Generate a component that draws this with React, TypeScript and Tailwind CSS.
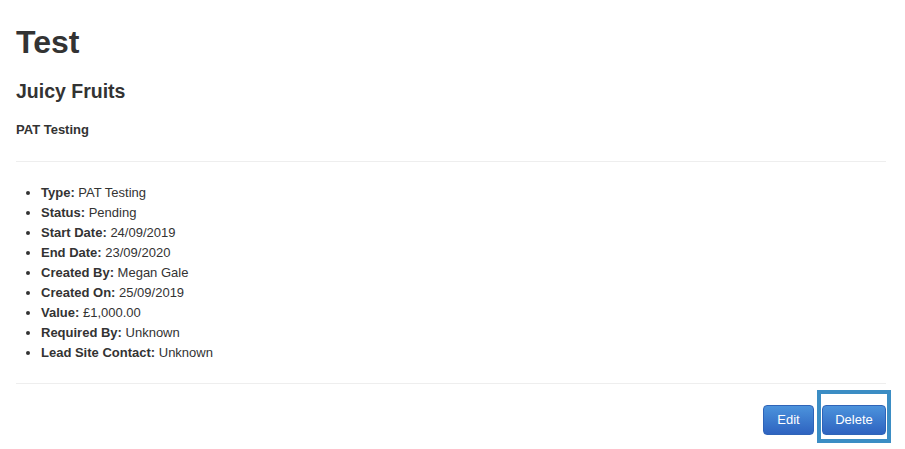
const details: [string, string][] = [
  ["Type:", "PAT Testing"],
  ["Status:", "Pending"],
  ["Start Date:", "24/09/2019"],
  ["End Date:", "23/09/2020"],
  ["Created By:", "Megan Gale"],
  ["Created On:", "25/09/2019"],
  ["Value:", "£1,000.00"],
  ["Required By:", "Unknown"],
  ["Lead Site Contact:", "Unknown"],
];

const btn =
  "h-[30px] rounded-[4px] border border-[#2f64b8] bg-gradient-to-b from-[#4c93dc] to-[#2f63c0] text-[13px] leading-[20px] text-white text-center";

export default function App() {
  return (
    <div className="min-h-screen bg-white pl-4 pr-[19px] text-[#333] font-['Liberation_Sans',Arial,sans-serif]">
      <h1 className="pt-6 text-[32px] leading-[36px] font-bold">Test</h1>
      <h3 className="mt-[20px] text-[19.5px] leading-[22px] font-bold">Juicy Fruits</h3>
      <h5 className="mt-[18px] text-[13px] leading-[20px] font-bold">PAT Testing</h5>

      <hr className="mt-[21px] border-0 border-t border-[#eee]" />

      <ul className="mt-[21px] list-disc pl-[25px] text-[13px] leading-[20px]">
        {details.map(([label, value]) => (
          <li key={label}>
            <b>{label}</b> {value}
          </li>
        ))}
      </ul>

      <hr className="mt-[20px] border-0 border-t border-[#eee]" />

      {/* Actions */}
      <div className="mt-[21px] flex justify-end gap-2">
        <button className={`${btn} w-[51px]`}>Edit</button>
        <div className="relative">
          <button className={`${btn} w-[64px]`}>Delete</button>
          <div className="pointer-events-none absolute -left-[5px] -right-[5px] -top-[15px] -bottom-[8px] border-4 border-[#3b8dc4]" />
        </div>
      </div>
    </div>
  );
}
